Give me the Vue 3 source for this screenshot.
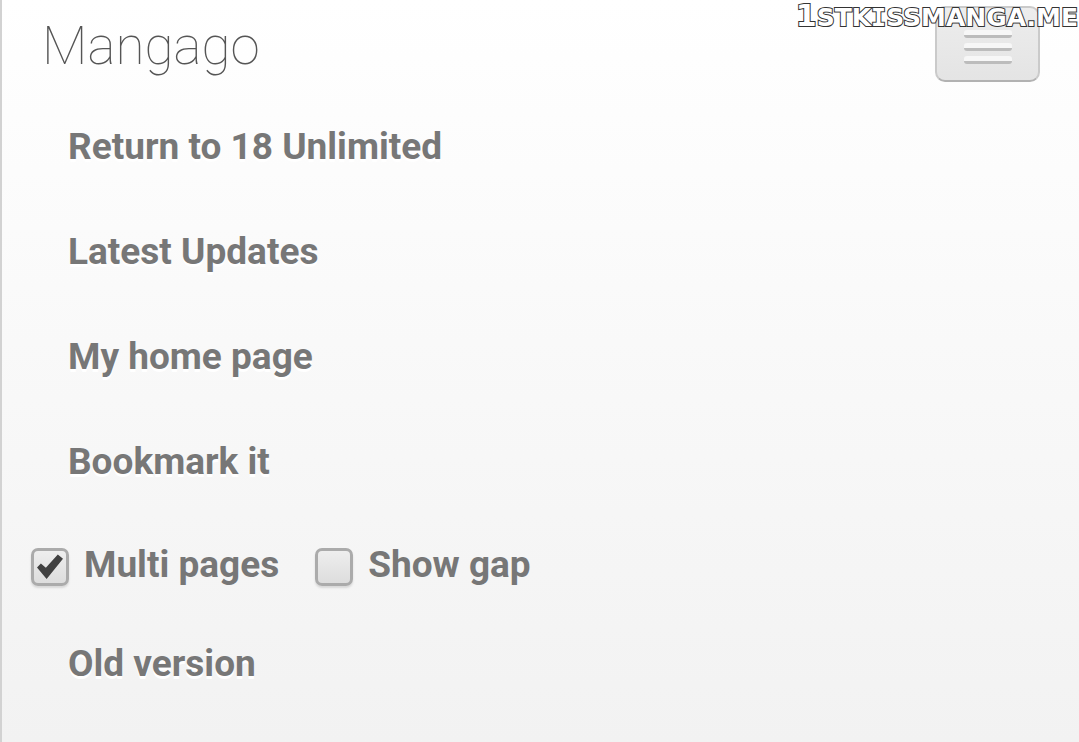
<script setup>
import { ref } from 'vue'

const links = ['Return to 18 Unlimited', 'Latest Updates', 'My home page', 'Bookmark it']
const multiPages = ref(true)
const showGap = ref(false)
</script>

<template>
  <div class="page">
    <header class="bar">
      <a class="brand" href="#">Mangago</a>
      <button class="toggle" type="button" aria-label="Menu">
        <span class="line"></span>
        <span class="line"></span>
        <span class="line"></span>
      </button>
    </header>
    <nav class="menu">
      <a v-for="link in links" :key="link" class="item" href="#">{{ link }}</a>
      <div class="options">
        <label class="option"><input v-model="multiPages" class="box" type="checkbox" />Multi pages</label>
        <label class="option"><input v-model="showGap" class="box" type="checkbox" />Show gap</label>
      </div>
      <a class="item" href="#">Old version</a>
    </nav>
    <div class="watermark"><span class="one">1</span>STK<span class="serif-i">I</span>SSMANGA.ME</div>
  </div>
</template>

<style>
body {
  margin: 0;
  background: #f2f2f2;
}
</style>

<style scoped>
.page {
  position: relative;
  box-sizing: border-box;
  min-height: 100vh;
  border-left: 2px solid #d2d2d2;
  background: linear-gradient(#ffffff, #f2f2f2);
  font-family: Roboto, sans-serif;
  color: #777777;
}

.bar {
  display: flex;
  justify-content: space-between;
  align-items: flex-start;
  padding: 6px 39px 0 40px;
}

.brand {
  padding-top: 8px;
  font-size: 53px;
  line-height: 64px;
  font-weight: 100;
  color: #555555;
  text-decoration: none;
}

.toggle {
  display: flex;
  flex-direction: column;
  align-items: center;
  justify-content: center;
  gap: 5px;
  box-sizing: border-box;
  width: 105px;
  height: 76px;
  padding: 5px 0 0;
  border: 2px solid #cacaca;
  border-bottom-color: #b2b2b2;
  border-radius: 10px;
  background: linear-gradient(#ededed, #e4e4e4);
}

.line {
  box-sizing: border-box;
  width: 48px;
  height: 8px;
  border-bottom: 3px solid #bcbcbc;
  border-radius: 3px;
  background: #f7f7f7;
}

.menu {
  display: flex;
  flex-direction: column;
  padding-top: 12px;
}

.item {
  padding: 30px 66px;
  font-size: 37px;
  line-height: 45px;
  font-weight: 700;
  color: #777777;
  text-decoration: none;
  text-shadow: 0 3px 0 #ffffff;
}

.options {
  display: flex;
  gap: 36px;
  padding: 28px 29px 24px;
}

.option {
  display: flex;
  align-items: center;
  gap: 15px;
  font-size: 37px;
  line-height: 45px;
  font-weight: 700;
}

.box {
  appearance: none;
  display: grid;
  place-items: center;
  box-sizing: border-box;
  width: 38px;
  height: 38px;
  margin: 4px 0 0;
  border: 3px solid #ababab;
  border-radius: 7px;
  background: linear-gradient(#eeeeee, #dddddd);
  box-shadow: 0 2px 2px #d8d8d8;
}

.box:checked::before {
  content: "";
  width: 26px;
  height: 26px;
  background: #414141;
  clip-path: polygon(0 54%, 15% 38%, 34% 55%, 80% 4%, 100% 20%, 37% 98%);
}

.watermark {
  position: absolute;
  top: 0;
  right: 1px;
  font-family: "DejaVu Sans", sans-serif;
  font-size: 25px;
  line-height: 32px;
  font-weight: 700;
  white-space: nowrap;
  color: #ffffff;
  -webkit-text-stroke: 2px #333333;
  paint-order: stroke fill;
}

.one {
  font-size: 30px;
}

.serif-i {
  font-family: "DejaVu Sans Mono", monospace;
}
</style>
